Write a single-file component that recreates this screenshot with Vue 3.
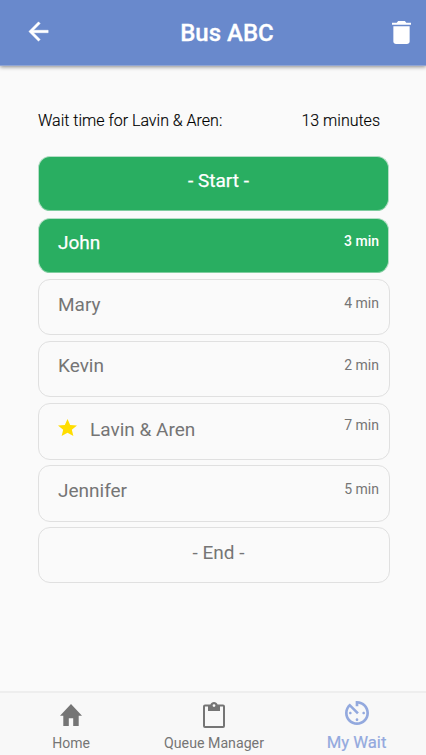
<script setup>
const rows = [
  { label: '- Start -', kind: 'start', marker: true, active: true },
  { label: 'John', time: '3 min', kind: 'john', active: true },
  { label: 'Mary', time: '4 min', kind: 'mary' },
  { label: 'Kevin', time: '2 min', kind: 'kevin' },
  { label: 'Lavin & Aren', time: '7 min', kind: 'mine', starred: true },
  { label: 'Jennifer', time: '5 min', kind: 'jennifer' },
  { label: '- End -', kind: 'end', marker: true },
]
</script>

<template>
  <div class="screen">
    <header class="bar">
      <button class="icon-btn" aria-label="Back">
        <svg class="back" viewBox="0 0 24 24"><path d="M20 11H7.83l5.59-5.59L12 4l-8 8 8 8 1.41-1.41L7.83 13H20v-2z" /></svg>
      </button>
      <h1>Bus ABC</h1>
      <button class="icon-btn" aria-label="Delete">
        <svg class="trash" viewBox="5 3 14 18" preserveAspectRatio="none"><path d="M6 19c0 1.1.9 2 2 2h8c1.1 0 2-.9 2-2V7.2H6V19zM19 4.4h-3.5l-1-1.4h-5l-1 1.4H5V6h14V4.4z" /></svg>
      </button>
    </header>

    <main>
      <div class="summary">
        <span class="who">Wait time for Lavin &amp; Aren:</span>
        <span class="total">13 minutes</span>
      </div>
      <ul class="queue">
        <li v-for="row in rows" :key="row.kind" class="card" :class="[row.kind, { active: row.active, marker: row.marker }]">
          <svg v-if="row.starred" class="star" viewBox="2 2 20 19" preserveAspectRatio="none"><path d="M12 17.27L18.18 21l-1.64-7.03L22 9.24l-7.19-.61L12 2 9.19 8.63 2 9.24l5.46 4.73L5.82 21z" /></svg>
          <span class="name">{{ row.label }}</span>
          <span v-if="row.time" class="time">{{ row.time }}</span>
        </li>
      </ul>
    </main>

    <nav class="tabs">
      <a class="tab">
        <svg class="home" viewBox="2 3 20 17" preserveAspectRatio="none"><path d="M10 20v-6h4v6h5v-8h3L12 3 2 12h3v8z" /></svg>
        <span>Home</span>
      </a>
      <a class="tab queue-tab">
        <svg class="clip" viewBox="0 0 22 26"><path fill-rule="evenodd" d="M7.4 2.6C8 1 9.300 0 11 0s3 1 3.600 2.600H20a2 2 0 0 1 2 2V24a2 2 0 0 1-2 2H2a2 2 0 0 1-2-2V4.600a2 2 0 0 1 2-2zM2 4.600V24h18V4.600h-3V9H5V4.600zM11 2.200a1.400 1.400 0 1 0 0 2.800 1.400 1.400 0 0 0 0-2.800z" /></svg>
        <span>Queue Manager</span>
      </a>
      <a class="tab current">
        <svg class="timer" viewBox="3 3 18 18"><path d="M11 17c0 .55.45 1 1 1s1-.45 1-1-.45-1-1-1-1 .45-1 1zm0-14v4h2V5.080c3.39.49 6 3.39 6 6.920 0 3.870-3.130 7-7 7s-7-3.130-7-7c0-1.680.59-3.220 1.580-4.420L12 13l1.410-1.410-6.800-6.800v.02C4.420 6.450 3 9.050 3 12c0 4.970 4.020 9 9 9 4.970 0 9-4.030 9-9s-4.030-9-9-9h-1zm7 9c0-.55-.45-1-1-1s-1 .45-1 1 .45 1 1 1 1-.45 1-1zM6 12c0 .55.45 1 1 1s1-.45 1-1-.45-1-1-1-1 .45-1 1z" /></svg>
        <span>My Wait</span>
      </a>
    </nav>
  </div>
</template>

<style>
body {
  background: #fafafa;
}
</style>

<style scoped>
.screen {
  box-sizing: border-box;
  width: 426px;
  height: 755px;
  display: flex;
  flex-direction: column;
  overflow: hidden;
  background: #fafafa;
  color: #000;
  font-family: Roboto, sans-serif;
}
svg {
  display: block;
  fill: currentColor;
}
.bar {
  box-sizing: border-box;
  flex: none;
  height: 66px;
  display: grid;
  grid-template-columns: 114px 1fr 86px;
  background: #6989cc;
  border-bottom: 1px solid #91a5d3;
  box-shadow: 0 1px 4px rgba(0, 0, 0, 0.45);
  color: #fff;
}
.icon-btn {
  display: flex;
  align-items: flex-start;
  padding: 0;
  border: 0;
  background: none;
  color: inherit;
}
.icon-btn:last-child {
  justify-content: flex-end;
}
.back {
  width: 29px;
  height: 29px;
  margin: 17px 0 0 24px;
  stroke: currentColor;
  stroke-width: 0.4;
}
.trash {
  width: 19px;
  height: 23px;
  margin: 21px 15px 0 0;
}
h1 {
  margin: 18px 0 0;
  text-align: center;
  font-size: 24px;
  line-height: 30px;
  font-weight: 500;
  -webkit-text-stroke: 0.3px currentColor;
}
main {
  flex: 1;
}
.summary {
  display: flex;
  justify-content: space-between;
  padding: 45px 46px 0 38px;
  font-size: 16px;
  line-height: 20px;
  font-weight: 300;
  white-space: nowrap;
  -webkit-text-stroke: 0.15px currentColor;
}
.queue {
  width: 352px;
  margin: 25px 0 0 38px;
  padding: 0;
  list-style: none;
}
.card {
  box-sizing: border-box;
  display: flex;
  align-items: flex-start;
  height: 56px;
  margin-bottom: 6px;
  padding: 13px 10px 0 19px;
  border: 1px solid #e0e0e0;
  border-radius: 12px;
  color: #757575;
}
.card.active {
  width: 351px;
  height: 55px;
  margin-bottom: 7px;
  padding-top: 12px;
  padding-right: 9px;
  background: #29ae61;
  border-color: #b5dec6;
  border-bottom-color: #7fcd9f;
  color: #fff;
}
.card.john {
  margin-bottom: 6px;
}
.card.kevin {
  padding-top: 12px;
}
.card.mine,
.card.jennifer {
  height: 57px;
  margin-bottom: 5px;
}
.card.mine {
  padding-top: 14px;
}
.card.marker {
  justify-content: center;
}
.name {
  font-size: 19px;
  line-height: 24px;
}
.active .name {
  -webkit-text-stroke: 0.25px currentColor;
}
.time {
  margin-left: auto;
  font-size: 14px;
  line-height: 20px;
}
.kevin .time {
  line-height: 22px;
}
.mine .time {
  line-height: 14px;
}
.active .time {
  font-weight: 500;
}
.star {
  width: 19px;
  height: 17px;
  margin: 1px 13px 0 0;
  color: #fd0;
}
.tabs {
  box-sizing: border-box;
  height: 64px;
  display: grid;
  grid-template-columns: repeat(3, 1fr);
  border-top: 2px solid #eee;
  background: #f8f8f8;
}
.tab {
  display: flex;
  flex-direction: column;
  align-items: center;
  color: #757575;
  font-size: 14px;
  line-height: 18px;
  white-space: nowrap;
}
.home {
  width: 22px;
  height: 22px;
  margin: 11px 0 8px;
}
.queue-tab {
  padding-left: 2px;
  font-size: 14.2px;
}
.clip {
  width: 22px;
  height: 26px;
  margin: 9px 0 6px;
}
.tab.current {
  padding-left: 3px;
  color: #93a9de;
  font-size: 16.7px;
  -webkit-text-stroke: 0.2px currentColor;
}
.timer {
  width: 24px;
  height: 24px;
  margin: 8px 0 9px;
}
</style>
